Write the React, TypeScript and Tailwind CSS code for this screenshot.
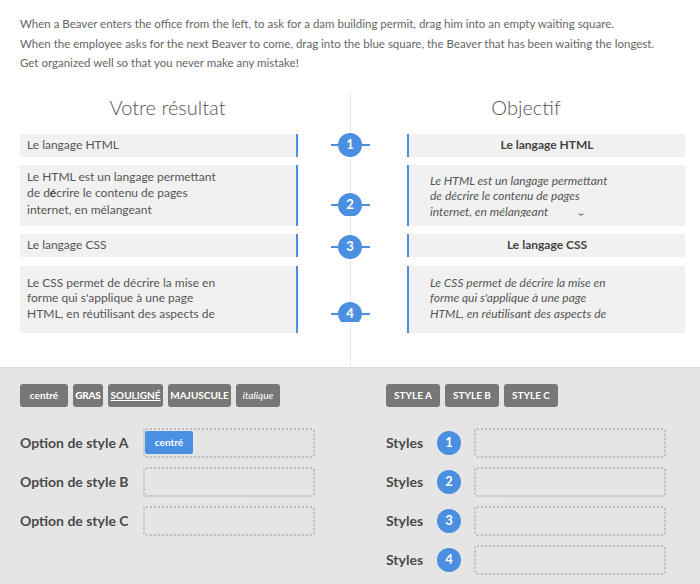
import React from 'react';

const font = { fontFamily: 'Lato, "Open Sans", sans-serif' };

function Connector({ n, clip }: { n: number; clip?: number }) {
  return (
    <div
      className="relative flex items-start ml-[33px] w-[39px] overflow-hidden"
      style={clip ? { height: clip } : undefined}
    >
      <div className="h-6 flex items-center">
        <div className="w-[7px] h-[2px] bg-[#4a8fe0]" />
      </div>
      <div className="w-6 h-6 shrink-0 rounded-full bg-[#4a8fe0] text-white text-[13px] font-bold flex items-center justify-center">
        {n}
      </div>
      <div className="h-6 flex items-center">
        <div className="w-[8px] h-[2px] bg-[#4a8fe0]" />
      </div>
    </div>
  );
}

function ToolButton({ children, className = '' }: { children: React.ReactNode; className?: string }) {
  return (
    <div className={`h-[23px] rounded-[3px] bg-[#777] text-white text-[10px] flex items-center justify-center ${className}`}>
      {children}
    </div>
  );
}

export default function App() {
  return (
    <div className="w-[700px] h-[584px] bg-white overflow-hidden flex flex-col" style={font}>
      {/* Consigne */}
      <div className="px-5 pt-[14px] text-[11.5px] leading-[19.5px] text-[#666] whitespace-nowrap">
        <p>When a Beaver enters the office from the left, to ask for a dam building permit, drag him into an empty waiting square.</p>
        <p>When the employee asks for the next Beaver to come, drag into the blue square, the Beaver that has been waiting the longest.</p>
        <p>Get organized well so that you never make any mistake!</p>
      </div>

      {/* Resultat / Objectif */}
      <div className="relative mt-[19px] h-[275px] shrink-0">
        <div className="absolute left-[350px] top-0 bottom-0 w-px bg-[#e9e9e9]" />

        <div className="flex pt-px text-[20px] leading-[28px] font-light text-[#555]">
          <div className="ml-5 w-[295px] text-center">Votre résultat</div>
          <div className="ml-[71px] w-[280px] text-center">Objectif</div>
        </div>

        <div className="mt-[13px] pl-5 flex flex-col">
          {/* Row 1 */}
          <div className="flex items-start h-[23px]">
            <div className="w-[278px] h-[23px] bg-[#f1f1f1] border-r-2 border-[#4a8fe0] pl-[7px] flex items-center text-[12px] text-[#555]">
              Le langage HTML
            </div>
            <div className="w-[109px] -mt-px">
              <Connector n={1} />
            </div>
            <div className="w-[278px] h-[23px] bg-[#f1f1f1] border-l-2 border-[#4a8fe0] flex items-center justify-center text-[12px] font-bold text-[#444]">
              Le langage HTML
            </div>
          </div>

          {/* Row 2 */}
          <div className="flex items-start mt-[8px]">
            <div className="w-[278px] h-[61px] bg-[#f1f1f1] border-r-2 border-[#4a8fe0] pl-[7px] pt-[4px] text-[12px] leading-[16.5px] text-[#555]">
              <div className="h-[49px] overflow-hidden">
                Le HTML est un langage permettant<br />
                de d<span className="font-semibold text-[#333]">é</span>crire le contenu de pages<br />
                internet, en mélangeant
              </div>
            </div>
            <div className="w-[109px] pt-[28px]">
              <Connector n={2} clip={23} />
            </div>
            <div className="relative w-[278px] h-[61px] bg-[#f1f1f1] border-l-2 border-[#4a8fe0] pl-[21px] pt-[8px] text-[12px] leading-[15.5px] italic text-[#555]">
              <div className="h-[44px] overflow-hidden">
                Le HTML est un langage permettant<br />
                de décrire le contenu de pages<br />
                internet, en mélangeant
              </div>
              <svg className="absolute left-[169px] top-[48px]" width="6" height="4" viewBox="0 0 6 4">
                <path d="M0.5 0.8 Q3 3.6 5.5 0.8" fill="none" stroke="#555" strokeWidth="1" />
              </svg>
            </div>
          </div>

          {/* Row 3 */}
          <div className="flex items-start h-[23px] mt-[8px]">
            <div className="w-[278px] h-[23px] bg-[#f1f1f1] border-r-2 border-[#4a8fe0] pl-[7px] flex items-center text-[12px] text-[#555]">
              Le langage CSS
            </div>
            <div className="w-[109px] mt-px">
              <Connector n={3} />
            </div>
            <div className="w-[278px] h-[23px] bg-[#f1f1f1] border-l-2 border-[#4a8fe0] flex items-center justify-center text-[12px] font-bold text-[#444]">
              Le langage CSS
            </div>
          </div>

          {/* Row 4 */}
          <div className="flex items-start mt-[9px]">
            <div className="w-[278px] h-[67px] bg-[#f1f1f1] border-r-2 border-[#4a8fe0] pl-[7px] pt-[9px] text-[12px] leading-[15.5px] text-[#555]">
              Le CSS permet de décrire la mise en<br />
              forme qui s'applique à une page<br />
              HTML, en réutilisant des aspects de
            </div>
            <div className="w-[109px] pt-[36px]">
              <Connector n={4} clip={20} />
            </div>
            <div className="w-[278px] h-[67px] bg-[#f1f1f1] border-l-2 border-[#4a8fe0] pl-[21px] pt-[9px] text-[12px] leading-[15.5px] italic text-[#555]">
              Le CSS permet de décrire la mise en<br />
              forme qui s'applique à une page<br />
              HTML, en réutilisant des aspects de
            </div>
          </div>
        </div>
      </div>

      {/* Outils */}
      <div className="flex-1 bg-[#e5e5e5] border-t border-[#dadada] pt-[16px] px-5 flex">
        <div className="w-[295px]">
          <div className="flex gap-[5px]">
            <ToolButton className="w-[48px] font-bold">centré</ToolButton>
            <ToolButton className="w-[30px] font-black tracking-tight">GRAS</ToolButton>
            <ToolButton className="w-[55px] font-bold underline">SOULIGNÉ</ToolButton>
            <ToolButton className="w-[63px] font-bold">MAJUSCULE</ToolButton>
            <ToolButton className="w-[44px] italic text-[#ddd]">italique</ToolButton>
          </div>
          <div className="mt-[21px] flex flex-col gap-[9px]">
            {['A', 'B', 'C'].map((l) => (
              <div key={l} className="flex items-center h-[30px]">
                <div className="w-[123px] text-[14px] font-bold text-[#4a4a4a]">Option de style {l}</div>
                <div className="w-[172px] h-[30px] border-2 border-dotted border-[#bdbdbd] rounded-[3px]">
                  {l === 'A' && (
                    <div className="mt-px w-[48px] h-[23px] rounded-[2px] bg-[#4a90e2] text-white text-[10px] font-bold flex items-center justify-center">
                      centré
                    </div>
                  )}
                </div>
              </div>
            ))}
          </div>
        </div>

        <div className="ml-[71px] w-[280px]">
          <div className="flex gap-[5px]">
            <ToolButton className="w-[54px] font-bold">STYLE A</ToolButton>
            <ToolButton className="w-[54px] font-bold">STYLE B</ToolButton>
            <ToolButton className="w-[54px] font-bold">STYLE C</ToolButton>
          </div>
          <div className="mt-[21px] flex flex-col gap-[9px]">
            {[1, 2, 3, 4].map((n) => (
              <div key={n} className="flex items-center h-[30px]">
                <div className="w-[51px] text-[14px] font-bold text-[#4a4a4a]">Styles</div>
                <div className="w-6 h-6 rounded-full bg-[#4a8fe0] text-white text-[13px] font-bold flex items-center justify-center">
                  {n}
                </div>
                <div className="ml-[13px] w-[192px] h-[30px] border-2 border-dotted border-[#bdbdbd] rounded-[3px]" />
              </div>
            ))}
          </div>
        </div>
      </div>
    </div>
  );
}
